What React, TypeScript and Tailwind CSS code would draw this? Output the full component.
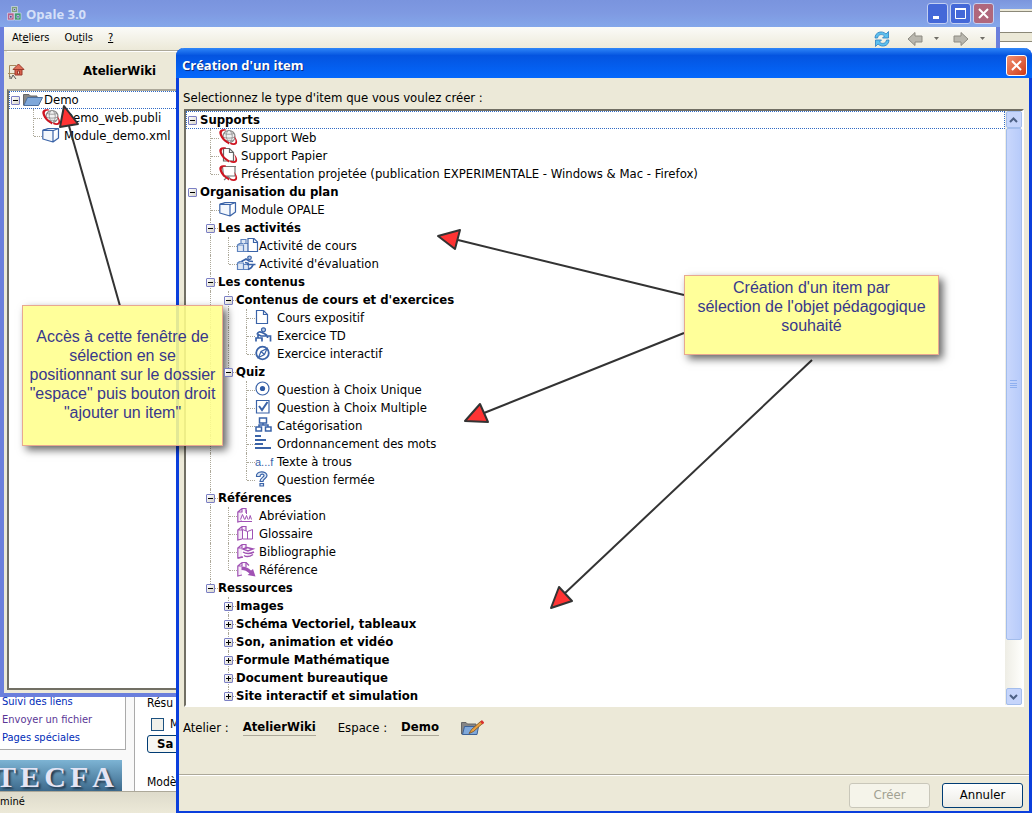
import React, { FC, ReactNode, useState } from 'react';

interface TreeNode {
  label: string;
  icon?: ReactNode;
  children?: TreeNode[];
  closed?: boolean;
}

const Icon: FC<{ children: ReactNode; color?: string }> = ({ children, color = '#3a63a8' }) => (
  <svg
    width="18"
    height="18"
    viewBox="0 0 18 18"
    fill="none"
    stroke={color}
    strokeWidth="1.2"
    className="shrink-0 overflow-visible"
  >
    {children}
  </svg>
);

const RedSwoosh = () => (
  <g fill="#cf1420" stroke="none">
    <path d="M7 .5C3-.5 0 .5.300 4C.600 7 3 10.500 6 12.800L10 15.500L10.500 13.500C7 11.500 4 8.500 3 5.500C2.300 3 3.500 1.500 7 1.500z" />
    <path d="M15 7c3 3 4 6 2.500 8-1.500 1.500-4.500 1-6.500 0l.5-1.500c2 .8 4 1 4.700 0 .8-1.500 0-4-1.200-6.500z" />
  </g>
);

const webIcon = (
  <Icon color="#8a8a8a">
    <circle cx="10" cy="7.500" r="6" fill="#f1f1f1" />
    <path d="M5 4.500c3 1 7 1 10 0M4 8c3 1.500 9 1.500 12 0M6 12c3-1 6-1 8 0M9 1.500c-3 4-2 8 1 12M11 1.500c3 4 3 8 0 12" strokeWidth=".8" />
    <RedSwoosh />
  </Icon>
);

const paperIcon = (
  <Icon color="#666">
    <path d="M4.500 1.500h6l4 4v8.500h-10z" fill="#fff" />
    <path d="M10.500 1.500v4h4" />
    <RedSwoosh />
  </Icon>
);

const screenIcon = (
  <Icon color="#777">
    <path d="M3.500 1.500h12.500v9.500H4.500z" fill="#fff" />
    <path d="M2.500 1.500h14.500M9 11.500l-4 3.500M9 11.500l3 3" />
    <RedSwoosh />
  </Icon>
);

const cubeIcon = (
  <Icon>
    <path
      d="M.8 3.200L6 1.500h10.500l-5 2zM.8 3.200v8.800l10.200 3V3.500M16.500 1.500v9.500L11 15"
      fill="#f3f7fc"
      strokeLinejoin="round"
    />
  </Icon>
);

const courseIcon = (
  <Icon>
    <path d="M.5 8h6v6.500h-6zM.5 8l2-1.500H6M4 6.500v-4h5v4.500M6.500 6.500h5v8h-5" fill="#dfe8f5" stroke="#5f84bf" />
    <path d="M11 1.500h6l3.500 3.500v9.500H11z" fill="#fff" />
    <path d="M16.500 1.500V5.500h4" />
  </Icon>
);

const evaluationIcon = (
  <Icon>
    <path d="M.5 8h6v6.500h-6zM.5 8l2-1.500H6M6.500 9.500h5v5h-5" fill="#dfe8f5" stroke="#5f84bf" />
    <circle cx="12.500" cy="2.800" r="1.800" fill="#b9cbe6" />
    <path d="M4.500 6.500L9 4l3 2 4 .5M8 7.500l4 1M10 9.500h8.500M16 10c-1 2.500-3 4-5 4.500" strokeWidth="1.700" />
  </Icon>
);

const pageIcon = (
  <Icon>
    <path d="M1.500 1.500h7l4 4v9h-11z" fill="#fff" />
    <path d="M8.500 1.500v4h4" />
  </Icon>
);

const exerciseIcon = (
  <Icon>
    <circle cx="8.500" cy="2.800" r="2" fill="#b9cbe6" />
    <path d="M2 7.500C3 4.500 5 4.500 7 5.500l3 1.500 2 1.500M3 7.500l3 1.500h9.500v5.500M12.500 9v2M1 14.500v-3.500h6v3.500M3 7.500v3" strokeWidth="1.700" />
  </Icon>
);

const interactiveIcon = (
  <Icon>
    <circle cx="7.500" cy="8" r="6.300" strokeWidth="1.800" />
    <path d="M12 3.500L6 6.500l-2.500 6 6-3zM6 6.500l3.500 3" />
  </Icon>
);

const radioIcon = (
  <Icon>
    <circle cx="7.500" cy="7.500" r="6.500" />
    <circle cx="7.500" cy="7.500" r="2.600" fill="#2f5aa4" stroke="none" />
  </Icon>
);

const checkIcon = (
  <Icon>
    <path d="M1.500 1.500h12.500v12.500h-12.500z" />
    <path d="M4 7l3 4 5.500-8" strokeWidth="2" />
  </Icon>
);

const categoryIcon = (
  <Icon>
    <path d="M4.500 1h7v5h-7zM1 10h5.500v4H1zM10.500 10H16v4h-5.500zM8 6v2M4 10V8h9v2" strokeWidth="1.500" />
  </Icon>
);

const orderIcon = (
  <Icon>
    <path d="M0 2h6M0 6h11M0 10h8M0 14h16" strokeWidth="2" transform="translate(0 -1)" />
  </Icon>
);

const gapIcon = (
  <span className="block w-[18px] font-['Liberation_Sans',sans-serif] text-[11px] leading-4 text-[#3a63a8]">a...f</span>
);

const questionIcon = (
  <Icon>
    <path d="M1.500 5.500C.5-.5 12-.5 12 4.500c0 3-4 3-4 6H5c0-4 4-4 4-6 0-2-4-2-4 1zM5 12.500h3.500v2.500H5z" fill="#dbe6f4" />
  </Icon>
);

const PurpleBook: FC<{ children: ReactNode }> = ({ children }) => (
  <Icon color="#a052b4">
    <path d="M5 1.500L.8 5v10l4.200-1M5 1.500h4V6M5 1.500V5H1" fill="#f6ebf9" />
    {children}
  </Icon>
);

const abbrevIcon = (
  <PurpleBook>
    <path d="M3.500 12.500l2-5 2 5M8 12.500l1.500-4 1.500 4M12 12.500l1.200-4 1.300 4M3 14.500h12M9.500 3v4" strokeWidth="1" />
  </PurpleBook>
);

const glossaryIcon = (
  <PurpleBook>
    <path d="M5.500 4.500l5 2 5-2v9.500H5.500zM10.500 6.500V14" fill="#fff" strokeWidth="1" />
  </PurpleBook>
);

const biblioIcon = (
  <PurpleBook>
    <path d="M6 6l4-1.500 6 1.500-5 2zM6 9c3 2 7 2 11 0M7 12.500c3 2 6 1 9-1M1 15l5-1" strokeWidth="1.500" />
  </PurpleBook>
);

const referenceIcon = (
  <PurpleBook>
    <path d="M4.500 5.500c4 0 7 1.500 9.500 4L16 8l2.500 7.500-8-1.500 2-1.500C10 10 7.500 9 4.500 9z" fill="#a052b4" stroke="none" />
    <path d="M9 1.500l3 3" />
  </PurpleBook>
);

const folderIcon = (
  <svg width="21" height="16" viewBox="0 0 21 16" className="shrink-0" stroke="#4b6f9e">
    <path d="M.5 13V2.500H6L7.500 4H14v9z" fill="#858585" stroke="#666" />
    <path d="M4.500 5.500h15l-4 8H.8z" fill="#7fa8da" />
  </svg>
);

const typeTree: TreeNode[] = [
  {
    label: 'Supports',
    children: [
      { label: 'Support Web', icon: webIcon },
      { label: 'Support Papier', icon: paperIcon },
      { label: 'Présentation projetée (publication EXPERIMENTALE - Windows & Mac - Firefox)', icon: screenIcon },
    ],
  },
  {
    label: 'Organisation du plan',
    children: [
      { label: 'Module OPALE', icon: cubeIcon },
      {
        label: 'Les activités',
        children: [
          { label: 'Activité de cours', icon: courseIcon },
          { label: "Activité d'évaluation", icon: evaluationIcon },
        ],
      },
      {
        label: 'Les contenus',
        children: [
          {
            label: "Contenus de cours et d'exercices",
            children: [
              { label: 'Cours expositif', icon: pageIcon },
              { label: 'Exercice TD', icon: exerciseIcon },
              { label: 'Exercice interactif', icon: interactiveIcon },
            ],
          },
          {
            label: 'Quiz',
            children: [
              { label: 'Question à Choix Unique', icon: radioIcon },
              { label: 'Question à Choix Multiple', icon: checkIcon },
              { label: 'Catégorisation', icon: categoryIcon },
              { label: 'Ordonnancement des mots', icon: orderIcon },
              { label: 'Texte à trous', icon: gapIcon },
              { label: 'Question fermée', icon: questionIcon },
            ],
          },
        ],
      },
      {
        label: 'Références',
        children: [
          { label: 'Abréviation', icon: abbrevIcon },
          { label: 'Glossaire', icon: glossaryIcon },
          { label: 'Bibliographie', icon: biblioIcon },
          { label: 'Référence', icon: referenceIcon },
        ],
      },
      {
        label: 'Ressources',
        children: [
          { label: 'Images', children: [], closed: true },
          { label: 'Schéma Vectoriel, tableaux', children: [], closed: true },
          { label: 'Son, animation et vidéo', children: [], closed: true },
          { label: 'Formule Mathématique', children: [], closed: true },
          { label: 'Document bureautique', children: [], closed: true },
          { label: 'Site interactif et simulation', children: [], closed: true },
        ],
      },
    ],
  },
];

const spaceTree: TreeNode[] = [
  {
    label: 'Demo',
    icon: folderIcon,
    children: [
      { label: 'Demo_web.publi', icon: webIcon },
      { label: 'Module_demo.xml', icon: cubeIcon },
    ],
  },
];

interface TreeItemProps {
  node: TreeNode;
  // one entry per ancestor level: does its vertical guide go on below?
  guides: boolean[];
  last: boolean;
  focused?: boolean;
}

const dots = 'border-[#aca899] border-dotted';

const TreeItem: FC<TreeItemProps> = ({ node, guides, last, focused }) => {
  const [open, setOpen] = useState<boolean>(!node.closed);
  const depth = guides.length;
  const isGroup = !!node.children;

  return (
    <li>
      <div
        className={`flex h-[18px] items-center border whitespace-nowrap ${
          focused ? 'border-dotted border-[#316ac5]' : 'border-transparent'
        }`}
      >
        {guides.map((on, i) => (
          <span key={i} className="flex h-[18px] w-[18px] shrink-0 pl-[5px]">
            {i > 0 && on && <span className={`border-l ${dots}`} />}
          </span>
        ))}
        <span className={`grid h-[18px] shrink-0 items-center ${isGroup ? 'w-[13px]' : 'w-[14px]'}`}>
          {depth > 0 && (
            <span
              className={`col-start-1 row-start-1 ml-[5px] self-start border-l ${dots} ${last ? 'h-[9px]' : 'h-[18px]'}`}
            />
          )}
          {depth > 0 && <span className={`col-start-1 row-start-1 ml-[6px] border-t ${dots}`} />}
          {isGroup && (
            <button
              aria-label={node.label}
              aria-expanded={open}
              onClick={() => setOpen(!open)}
              className="z-10 col-start-1 row-start-1 ml-px grid h-[9px] w-[9px] place-items-center rounded-[1px] border border-[#7b7fc4] bg-linear-to-br from-white to-[#d6d4ca]"
            >
              <span className="col-start-1 row-start-1 h-px w-[5px] bg-black" />
              {!open && <span className="col-start-1 row-start-1 h-[5px] w-px bg-black" />}
            </button>
          )}
        </span>
        {node.icon && <span className={isGroup ? '' : 'w-[22px]'}>{node.icon}</span>}
        <span className={isGroup && !node.icon ? 'font-bold' : ''}>{node.label}</span>
      </div>
      {open && isGroup && (
        <ul>
          {node.children!.map((child, i) => (
            <TreeItem
              key={child.label}
              node={child}
              guides={[...guides, !last]}
              last={i === node.children!.length - 1}
            />
          ))}
        </ul>
      )}
    </li>
  );
};

const WindowButton: FC<{ label: string; className: string; children: ReactNode }> = ({ label, className, children }) => (
  <button aria-label={label} className={`grid h-[21px] w-[21px] place-items-center rounded-[3px] border ${className}`}>
    <svg width="15" height="15" viewBox="0 0 15 15" stroke="#fff" fill="none">
      {children}
    </svg>
  </button>
);

const NavArrow: FC<{ flip?: boolean }> = ({ flip }) => (
  <svg width="16" height="16" viewBox="0 0 16 16" className={flip ? 'rotate-180' : ''}>
    <path d="M1 8l7-6.500V5h7v6H8v3.500z" fill="#b9b7ae" stroke="#8d8b82" strokeLinejoin="round" />
  </svg>
);

const Caret = () => (
  <svg width="5" height="3" viewBox="0 0 5 3">
    <path d="M0 0h5L2.500 3z" fill="#6f6d66" />
  </svg>
);

const BrowserBehind = () => (
  <div className="absolute inset-0 flex flex-col justify-between bg-white">
    <div>
      <div className="h-[9px] bg-linear-to-b from-[#7b95dd] to-[#86a4e6]" />
      <div className="h-[3px] border-b border-[#8b8878] bg-[#ece9d8]" />
      <div className="h-5" />
      <div className="h-[10px] border-y border-[#8b8878] bg-[#ece9d8]" />
    </div>
    <div className="text-[12px]">
      <div className="flex h-[94px]">
        <div className="flex w-[135px] shrink-0 flex-col justify-end gap-[10px] border-r border-[#aaa] bg-[#f9f9f9]">
          <ul className="w-[126px] border-r border-b border-[#aaa] bg-white pb-[2px] pl-[2px] text-[11px] leading-[18px] text-[#002bb8]">
            <li><a href="#liens">Suivi des liens</a></li>
            <li><a href="#envoyer" className="text-[#5a3696]">Envoyer un fichier</a></li>
            <li><a href="#pages">Pages spéciales</a></li>
          </ul>
          <div className="h-[31px] w-[122px] bg-linear-to-b from-[#7db4d4] to-[#3d6a8c] pt-[3px] font-['Liberation_Serif',serif] text-[30px] leading-7 font-bold text-[#e4e4f4] [text-shadow:2px_2px_2px_#24394d]">
            <div className="-ml-1 flex justify-between pr-2">
              {['T', 'E', 'C', 'F', 'A'].map((letter) => <span key={letter}>{letter}</span>)}
            </div>
          </div>
        </div>
        <div className="flex flex-col items-start justify-end pl-3">
          <span className="leading-4">Résu</span>
          <label className="mt-1 flex h-5 items-center gap-[6px] pl-1">
            <input type="checkbox" className="h-[13px] w-[13px] appearance-none border border-[#1c5180] bg-[#f0f0ea]" />
            M
          </label>
          <button className="mt-[2px] h-5 rounded-[3px] border border-[#003c74] bg-[#f6f6f2] pr-3 pl-[9px] text-[13px] leading-4 font-bold">Sa</button>
          <span className="mt-5 leading-[18px]">Modè</span>
        </div>
      </div>
      <div className="h-[22px] border-t border-[#aca899] bg-linear-to-b from-[#dedbcb] to-[#ece9d8] text-[11px] leading-5">miné</div>
    </div>
  </div>
);

const OpaleWindow = () => (
  <div className="absolute top-0 right-8 bottom-[116px] left-0 flex flex-col border-x-4 border-b-4 border-[#6b7fdc] bg-[#ece9d8]">
    <div className="-mx-1 flex h-[27px] shrink-0 items-center bg-linear-to-b from-[#7a94de] via-[#7f9ae2] to-[#84a7ea] px-[6px]">
      <svg width="17" height="17" viewBox="0 0 17 17" stroke="#e4e8f4" strokeWidth=".6">
        <path d="M5.500 1.500h6v6h-6z" fill="#7da079" />
        <path d="M1.500 8h6.500v7H1.500z" fill="#b8608c" />
        <path d="M8.500 8H15v7H8.500z" fill="#3f9a72" />
        <path d="M7.500 3.500h2v2h-2zM3.500 10.500h2.500v2.500H3.500zM11 10.500h2v2.500h-2z" fill="#4a4f98" />
      </svg>
      <h1 className="ml-[3px] flex-1 font-['Open_Sans',sans-serif] text-[13px] leading-5 font-bold text-[#d5e0f8]">Opale 3.0</h1>
      <div className="flex gap-[2px]">
        <WindowButton label="Réduire" className="border-[#c3d0f2] bg-[#4468d8]"><path d="M3 11.500h6" strokeWidth="3" /></WindowButton>
        <WindowButton label="Agrandir" className="border-[#c3d0f2] bg-[#4468d8]"><path d="M2.500 2.500h10v10h-10z" /><path d="M2 3h11" strokeWidth="2" /></WindowButton>
        <WindowButton label="Fermer" className="border-[#c3d0f2] bg-[#b0677c]"><path d="M3 3l9 9M12 3l-9 9" strokeWidth="2" /></WindowButton>
      </div>
    </div>
    <div className="flex h-6 shrink-0 items-center border-b border-[#aca899] bg-linear-to-b from-[#fbfbf8] to-[#ece9d8] pr-[11px] pl-2 text-[11px]">
      <nav className="flex flex-1 gap-[15px]">
        <button>At<u>e</u>liers</button>
        <button>Ou<u>t</u>ils</button>
        <button><u>?</u></button>
      </nav>
      <button aria-label="Actualiser">
        <svg width="18" height="18" viewBox="0 0 18 18" fill="#5cc0ee" stroke="#2c7fc0" strokeWidth=".8">
          <path d="M2 8C2 2 9 0 13 4l2.500-2.500V8H9.500L11.500 6C9 3.500 5 4.500 4.500 8z" />
          <path d="M16 10c0 6-7 8-11 4l-2.500 2.500V10h6L6.500 12c2.500 2.500 6.500 1.500 7-2z" />
        </svg>
      </button>
      <div className="ml-4 flex items-center gap-[14px]">
        <button aria-label="Précédent" className="flex items-center gap-[11px]"><NavArrow /><Caret /></button>
        <button aria-label="Suivant" className="flex items-center gap-[11px]"><NavArrow flip /><Caret /></button>
      </div>
    </div>
    <div className="flex min-h-0 w-[210px] flex-1 flex-col pl-[3px]">
      <div className="flex h-[38px] items-center border-t border-white">
        <svg width="18" height="18" viewBox="0 0 18 18" fill="none" stroke="#a58a5e">
          <path d="M2.500 15V3.500H9M1 11.500h11" />
          <path d="M8 7v6h7V7" fill="#d8604c" stroke="#9a3a2c" />
          <path d="M6 7.500L11.500 2 17 7.500z" fill="#e0705a" stroke="#9a3a2c" />
          <path d="M10.500 9h2v3h-2z" fill="#f8dcc8" stroke="#9a3a2c" />
          <path d="M3 14v3M6 13l-2 4M6 13l3 4" stroke="#555" />
        </svg>
        <h2 className="flex-1 text-center text-[13px] font-bold">AtelierWiki</h2>
      </div>
      <ul className="mb-[3px] flex-1 border-2 border-[#716f64] border-t-[#aca899] bg-white text-[13px] leading-[18px]">
        {spaceTree.map((node) => <TreeItem key={node.label} node={node} guides={[]} last focused />)}
      </ul>
    </div>
  </div>
);

const ScrollButton: FC<{ label: string; d: string }> = ({ label, d }) => (
  <button aria-label={label} className="grid h-[17px] w-4 place-items-center rounded-[2px] border border-[#a3bdec] bg-[#c6d5fb]">
    <svg width="9" height="6" viewBox="0 0 9 6" fill="none" stroke="#4d6185" strokeWidth="2"><path d={d} /></svg>
  </button>
);

const ItemDialog = () => (
  <section className="absolute top-12 right-0 bottom-0 left-[176px] flex flex-col rounded-t-lg border-x-[3px] border-b-2 border-[#0b3fdc] bg-[#ece9d8]">
    <header className="-mx-[3px] flex h-[30px] shrink-0 items-center justify-between rounded-t-lg bg-linear-to-b from-[#2f86f8] via-[#0454e0] via-25% to-[#0468fc] pt-1 pr-[5px] pl-[6px]">
      <h2 className="font-['Open_Sans',sans-serif] text-[13px] leading-5 font-bold text-white [text-shadow:1px_1px_0_#0b2a80]">Création d'un item</h2>
      <WindowButton label="Fermer" className="border-white bg-linear-to-br from-[#f09070] to-[#d03810]"><path d="M3 3l9 9M12 3l-9 9" strokeWidth="2" /></WindowButton>
    </header>
    <p className="h-[31px] shrink-0 pt-3 pl-1 text-[13px] leading-4">Selectionnez le type d'item que vous voulez créer :</p>
    <div className="mx-[5px] flex min-h-0 flex-1 border-2 border-t-[#716f64] border-r-white border-b-white border-l-[#716f64] bg-white">
      <ul className="flex-1 overflow-hidden text-[13px] leading-[18px]">
        {typeTree.map((node, i) => (
          <TreeItem key={node.label} node={node} guides={[]} last={i === typeTree.length - 1} focused={i === 0} />
        ))}
      </ul>
      <div className="flex w-[17px] flex-col items-center bg-linear-to-r from-[#eeede5] to-[#fefefb]">
        <ScrollButton label="Défiler vers le haut" d="M1 5l3.500-3.500L8 5" />
        <div className="grid w-4 flex-[512] place-items-center rounded-[2px] border border-[#a3bdec] bg-linear-to-r from-[#c9d7fc] to-[#b7cbfa]">
          <div className="h-2 w-[7px] border-y border-[#8fb0f0]"><div className="mt-[2px] h-[3px] border-y border-[#8fb0f0]" /></div>
        </div>
        <div className="flex-[48]" />
        <ScrollButton label="Défiler vers le bas" d="M1 1l3.500 3.500L8 1" />
      </div>
    </div>
    <div className="flex h-[67px] shrink-0 items-start pt-3 pl-1 text-[13px] leading-[17px]">
      <span>Atelier :</span>
      <button className="ml-[14px] border-b border-[#aca899] leading-4 font-bold">AtelierWiki</button>
      <span className="ml-[22px]">Espace :</span>
      <button className="ml-[14px] border-b border-[#aca899] leading-4 font-bold">Demo</button>
      <button aria-label="Changer d'espace" className="ml-[22px]">
        <svg width="23" height="18" viewBox="0 0 23 18" stroke="#3d6296">
          <path d="M.5 15V3.500H5L6.500 5H15v10z" fill="#858585" stroke="#666" />
          <path d="M3.500 7.500h14l-1.500 8H1.500z" fill="#7fa8da" />
          <path d="M19.500 2.500l2 2-9 8-4.500 2 2.500-4z" fill="#e8a040" stroke="#7a5220" strokeWidth=".8" />
          <path d="M20 2l2.500 2.500" stroke="#d83030" strokeWidth="2.500" />
        </svg>
      </button>
    </div>
    <footer className="flex h-[37px] shrink-0 items-center justify-end gap-3 border-t border-[#aca899] pt-1 pr-[6px] text-[13px] shadow-[inset_0_1px_0_#fff]">
      <button disabled className="h-[25px] w-[81px] rounded-[3px] border border-[#c9c7ba] bg-[#f5f4ea] text-[#a1a192]">Créer</button>
      <button className="h-[25px] w-[81px] rounded-[3px] border border-[#003c74] bg-linear-to-b from-white to-[#ecebe5]">Annuler</button>
    </footer>
  </section>
);

const noteStyle =
  "absolute border border-[#e8a890] bg-[#ffff8c]/88 text-center font-['Liberation_Sans',sans-serif] text-[16px] leading-[19px] text-[#38388c] shadow-[4px_4px_8px_rgba(0,0,0,0.6)]";

const arrows = [
  { line: 'M120 306L69 126', head: 'M64 106L60 127L78 124z' },
  { line: 'M684 295L458 240', head: 'M438 236L460 230L455 249z' },
  { line: 'M684 333L484 413', head: 'M465 421L480 404L488 422z' },
  { line: 'M812 360L564 594', head: 'M551 608L559 587L572 601z' },
];

const App = () => (
  <main className="relative h-screen overflow-hidden font-['DejaVu_Sans_Condensed','DejaVu_Sans',sans-serif] text-black">
    <BrowserBehind />
    <OpaleWindow />
    <ItemDialog />
    <svg className="pointer-events-none absolute inset-0 h-full w-full" stroke="#333" strokeWidth="2" strokeLinejoin="round">
      {arrows.map((arrow) => (
        <g key={arrow.head}>
          <path d={arrow.line} />
          <path d={arrow.head} fill="#ff3333" />
        </g>
      ))}
    </svg>
    <p className={`${noteStyle} top-[305px] left-[22px] h-[141px] w-[201px] px-px pt-[21px]`}>
      Accès à cette fenêtre de sélection en se positionnant sur le dossier "espace" puis bouton droit "ajouter un item"
    </p>
    <p className={`${noteStyle} top-[275px] left-[684px] h-20 w-[255px] px-2 pt-[2px]`}>
      Création d'un item par
      <br />
      sélection de l'objet pédagogique souhaité
    </p>
  </main>
);

export default App;
